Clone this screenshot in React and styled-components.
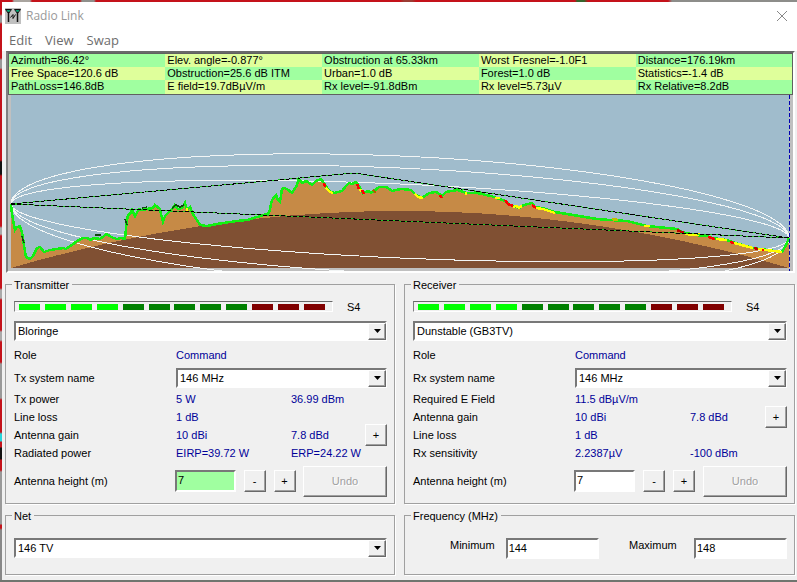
import React from "react";
import styled, { createGlobalStyle } from "styled-components";

const GlobalStyle = createGlobalStyle`
  * { box-sizing: border-box; }
  body { margin: 0; }
  body, button, input, select {
    font-family: "Liberation Sans", Arial, sans-serif;
    font-size: 11px;
    line-height: 14px;
    color: #000;
  }
`;

const Desktop = styled.div`
  display: flex;
  min-height: 100vh;
  padding: 2px 0 2px 2px;
  background:
    linear-gradient(#70756f, #70756f) bottom / 100% 2px no-repeat,
    linear-gradient(90deg, #c4121a 12px, #a9a49f 14px 30px, #c4121a 32px 80px, #8f8f8b 82px 94px, #c4121a 96px 400px, #9b3d34 404px 412px, #c4121a 416px 575px, #35652c 577px 584px, #c4121a 588px 668px, #8d8d8a 672px) top / 100% 2px no-repeat,
    linear-gradient(#c4121a 14px, #999 16px 22px, #c4121a 24px 58px, #999 60px 68px, #c4121a 70px 160px, #111 162px 174px, #c4121a 176px 226px, #aaa 228px 234px, #c4121a 236px 288px, #aaa 290px 298px, #c4121a 300px 330px, #aaa 332px 340px, #c4121a 342px 362px, #999 364px 398px, #c4121a 400px 432px, #25d6dc 434px 441px, #c4121a 442px 447px, #111 448px 459px, #c4121a 460px 470px, #999 472px 524px, #c4121a 525px 528px, #888 530px);
`;

const Window = styled.main`
  flex: 1;
  min-width: 0;
  background: #f0f0f0;
`;

const TitleBar = styled.header`
  display: flex;
  align-items: center;
  gap: 5px;
  height: 27px;
  padding: 0 9px 0 3px;
  background: #fff;
`;

const Title = styled.h1`
  flex: 1;
  margin: 0;
  font: 400 12px/18px "Open Sans", "Noto Sans", sans-serif;
  color: #999;
`;

const CloseButton = styled.button`
  display: flex;
  padding: 0;
  border: 0;
  background: none;
`;

const MenuBar = styled.nav`
  display: flex;
  gap: 13px;
  height: 22px;
  padding: 0 7px;
  background: #fff;
`;

const MenuItem = styled.button`
  padding: 0;
  border: 0;
  background: none;
  font: 400 13px/22px "Open Sans", "Noto Sans", sans-serif;
  color: #6d6d6d;
`;

const ProfilePanel = styled.section`
  margin: 0 2px 0 4px;
  border: 2px solid;
  border-color: #696969 #fff #fff #808080;
  background: #c0c0c0;
`;

const Readouts = styled.table`
  width: 100%;
  table-layout: fixed;
  border-collapse: collapse;
  border: 1px solid #606060;
`;

const ReadoutRow = styled.tr`
  height: 13px;

  &:last-child { height: 14px; }
`;

const Readout = styled.td`
  padding: 0 0 0 2px;
  line-height: 13px;
  white-space: nowrap;
  background: ${(p) => (p.$alt ? "#dfff9b" : "#a0ffa0")};
`;

const Chart = styled.svg`
  display: block;
  width: 100%;
  height: 176px;
`;

const Panels = styled.div`
  display: grid;
  grid-template-columns: 390fr 391fr;
  column-gap: 9px;
  row-gap: 5px;
  padding: 5px 2px 5px 3px;
`;

const Group = styled.fieldset`
  min-width: 0;
  margin: 0;
  padding: 0 7px 5px 8px;
  border: 1px solid #a0a0a0;
  box-shadow: 1px 1px 0 #fff;
`;

const Legend = styled.legend`
  height: 14px;
  margin-left: -2px;
  padding: 0 3px 0 2px;
`;

const MeterRow = styled.div`
  display: flex;
  align-items: center;
  gap: 14px;
  padding: 8px 0 7px;
`;

const Meter = styled.div`
  display: flex;
  justify-content: space-between;
  width: 319px;
  height: 11px;
  padding: 1px 7px 1px 4px;
  border: 1px solid;
  border-color: #696969 #fff #fff #808080;
`;

const Segment = styled.span`
  width: 21px;
  height: 6px;
  margin-top: 1px;
  background: ${(p) => p.$color};
`;

const Sunken = styled.div`
  position: relative;
  min-width: 0;
  height: 20px;
  border: 2px solid;
  border-color: #787878 #fff #fff #787878;
  background: #fff;
`;

const Select = styled.select`
  display: block;
  appearance: none;
  width: 100%;
  height: 16px;
  padding: 0 18px 0 2px;
  border: 0;
  outline: 0;
  line-height: 16px;
  background: #fff;
`;

const DropArrow = styled.span`
  position: absolute;
  top: 0;
  right: -1px;
  display: grid;
  place-items: center;
  width: 18px;
  height: 17px;
  border: 1px solid;
  border-color: #fff #696969 #696969 #fff;
  box-shadow: inset -1px -1px 0 #a0a0a0;
  background: #f0f0f0;
  pointer-events: none;
`;

const Fields = styled.div`
  display: grid;
  grid-template-columns: 162px 115px 1fr;
  grid-template-rows: 25px 22px;
  grid-auto-rows: 18px;
  align-items: center;
  padding: 2px 0 3px;
`;

const FieldLabel = styled.label`
  grid-column: 1;
`;

const SystemLabel = styled(FieldLabel)`
  align-self: start;
  line-height: 20px;
`;

const SystemField = styled.div`
  grid-column: 2 / -1;
  align-self: start;
`;

const Value = styled.output`
  color: #000099;
  white-space: nowrap;
`;

const PushButton = styled.button`
  width: ${(p) => (p.$large ? "84px" : "22px")};
  height: ${(p) => (p.$large ? "31px" : "22px")};
  padding: 0;
  border: 1px solid;
  border-color: #fff #696969 #696969 #fff;
  box-shadow: inset -1px -1px 0 #a0a0a0;
  background: #f0f0f0;

  &:disabled { color: #a0a0a0; text-shadow: 1px 1px 0 #fff; }
`;

const LastCell = styled.div`
  display: flex;
  justify-content: space-between;
  align-items: center;
  height: 18px;
`;

const HeightLine = styled.div`
  display: grid;
  grid-template-columns: 161px 1fr;
  align-items: center;
  height: 33px;
`;

const HeightControls = styled.div`
  display: flex;
  align-items: center;
  justify-content: space-between;
`;

const HeightBox = styled.input`
  width: 61px;
  height: 22px;
  padding: 0 2px 3px 1px;
  border: 2px solid;
  border-color: #787878 #fff #fff #787878;
  outline: 0;
  background: ${(p) => (p.$changed ? "#a0ffa0" : "#fff")};
`;

const Steppers = styled.div`
  display: flex;
  gap: 8px;
`;

const NetBody = styled.div`
  padding: 15px 0 10px;
`;

const FrequencyBody = styled.div`
  display: flex;
  justify-content: space-between;
  padding: 15px 0 10px 37px;
`;

const Frequency = styled.label`
  display: flex;
  gap: 11px;
`;

const FrequencyName = styled.span`
  min-width: ${(p) => (p.$wide ? "54px" : "41px")};
`;

const FrequencyBox = styled.input`
  width: 93px;
  height: 21px;
  padding: 0 1px;
  border: 2px solid;
  border-color: #787878 #fff #fff #787878;
  outline: 0;
`;

const READOUTS = [
  ["Azimuth=86.42°", "Elev. angle=-0.877°", "Obstruction at 65.33km", "Worst Fresnel=-1.0F1", "Distance=176.19km"],
  ["Free Space=120.6 dB", "Obstruction=25.6 dB ITM", "Urban=1.0 dB", "Forest=1.0 dB", "Statistics=-1.4 dB"],
  ["PathLoss=146.8dB", "E field=19.7dBµV/m", "Rx level=-91.8dBm", "Rx level=5.73µV", "Rx Relative=8.2dB"],
];

const TERRAIN =
  "11,204 12,214 15,230 17,227 20,226 22,233 24,245 26,257 30,259 33,256 37,248 40,247 44,252 50,250 57,249 63,248 66,249 72,245 77,241 83,238 87,238 90,240 94,238 100,239 104,236 107,234 111,237 117,239 121,238 125,239 126,228 127,220 128,215 130,214 132,210 135,216 139,209 142,210 147,209 153,208 155,205 160,209 162,218 163,222 165,216 168,213 171,210 173,208 175,205 178,209 182,208 185,203 187,210 190,207 193,214 197,220 200,225 207,226 217,224 230,222 237,221 247,220 257,217 264,215 269,213 272,200 276,195 278,200 280,202 282,189 284,188 287,189 292,193 296,187 299,179 302,183 306,181 312,185 316,181 321,179 324,183 329,191 334,193 342,191 346,186 349,183 352,184 356,182 359,186 363,193 368,191 371,193 374,191 379,187 386,187 392,191 401,189 411,190 416,195 422,198 429,193 436,192 442,196 446,192 457,190 467,193 477,193 491,196 497,198 505,201 510,205 519,208 524,205 532,203 535,207 542,208 555,212 573,215 597,219 610,220 627,221 647,226 677,229 682,232 695,235 707,236 713,238 727,240 732,242 753,248 760,249 782,252 786,245 789,238";

const OBSTRUCTIONS = [
  ["#ffff00", "326,188 330,192 333,193"],
  ["#ff0000", "324,183 325,187"],
  ["#ff0000", "357,184 359,189"],
  ["#ffff00", "360,189 362,192"],
  ["#ff0000", "362,190 364,194"],
  ["#b06000", "373,190 376,193"],
  ["#ffff00", "415,194 418,197 423,198"],
  ["#ff0000", "440,195 442,198"],
  ["#ffff00", "465,193 467,194"],
  ["#ffff00", "495,198 500,198"],
  ["#ff0000", "505,200 508,204 513,206"],
  ["#ffff00", "513,207 516,206 519,208 522,206"],
  ["#ff0000", "532,205 536,208"],
  ["#ffff00", "536,208 543,209 555,213"],
  ["#c0c000", "612,219 618,220"],
  ["#ffff00", "644,226 650,226"],
  ["#c00000", "677,230 684,233"],
  ["#ffff00", "685,234 696,235 700,234"],
  ["#ff0000", "708,237 715,239"],
  ["#ffff00", "716,239 727,240"],
  ["#ff0000", "730,242 734,243"],
  ["#ffff00", "734,243 753,248"],
  ["#c00000", "754,248 758,249"],
  ["#ffff00", "758,249 782,252"],
  ["#ff0000", "762,250 764,250"],
  ["#ffff00", "186,209 188,210"],
];

const SIGHT_LINES = "M11 204L267 181 354 173 789 238M11 204L789 238";

function fresnelPoints(radius) {
  const steps = 60;
  const side = (sign) =>
    Array.from({ length: steps + 1 }, (_, i) => {
      const t = (1 - Math.cos((Math.PI * i) / steps)) / 2;
      const y = 204 + 34 * t + sign * radius * 2 * Math.sqrt(t * (1 - t));
      return `${(11 + 778 * t).toFixed(1)},${y.toFixed(1)}`;
    });
  return [...side(-1), ...side(1).reverse()].join(" ");
}

function Profile() {
  return (
    <Chart
      viewBox="8 95 785 176"
      preserveAspectRatio="none"
      shapeRendering="crispEdges"
      role="img"
      aria-label="Terrain profile"
    >
      <rect x="11" y="95" width="778" height="173" fill="#a0bccc" />
      <polygon points={`${TERRAIN} 789,268 11,268`} fill="#c68a46" />
      <path d="M11 268Q400 154 789 268Z" fill="#805033" />
      <g fill="none" stroke="#f2f5f5" strokeWidth="1">
        {[37, 53, 65].map((r) => (
          <polygon key={r} points={fresnelPoints(r)} />
        ))}
      </g>
      <polyline points={TERRAIN} fill="none" stroke="#12f012" strokeWidth="2.5" />
      <path d="M142 208l5-1M172 208l4-3 4 2 4-2M95 235h6M22 236l2 7M125 219l2 6" fill="none" stroke="#104a10" strokeWidth="1.5" />
      {OBSTRUCTIONS.map(([color, points]) => (
        <polyline key={points} points={points} fill="none" stroke={color} strokeWidth="2.5" />
      ))}
      <path d={SIGHT_LINES} fill="none" stroke="#1fc41f" />
      <path d={SIGHT_LINES} fill="none" stroke="#000" strokeDasharray="4 2" />
      <path d="M789.5 95V271" stroke="#0000b0" strokeDasharray="4 2" />
    </Chart>
  );
}

function AppIcon() {
  return (
    <svg width="16" height="16" viewBox="0 0 16 16" aria-hidden="true">
      <path d="M0 0h16v16H0z" fill="#c0c0c0" />
      <path d="M1 2h5L3.500 5zM10 2h5l-2.500 3z" fill="#00a070" />
      <path d="M.5 1.500l3 4 3-4M9.500 1.500l3 4 3-4M.5 1.500h6M9.500 1.500h6" fill="none" stroke="#111" />
      <path d="M3.500 4v10M12.500 4v10" stroke="#111" strokeWidth="1.500" />
      <path d="M5.500 9.500l2.500-3v4l2.500-4" fill="none" stroke="#111" />
    </svg>
  );
}

function DropDown({ id, value, label }) {
  return (
    <Sunken>
      <Select id={id} aria-label={label} defaultValue={value}>
        <option>{value}</option>
      </Select>
      <DropArrow>
        <svg width="7" height="4" viewBox="0 0 7 4" aria-hidden="true">
          <path d="M0 0h7L3.500 4z" />
        </svg>
      </DropArrow>
    </Sunken>
  );
}

function Station({ id, title, site, systemLabel, rows, changed }) {
  return (
    <Group>
      <Legend>{title}</Legend>
      <MeterRow>
        <Meter role="img" aria-label="Signal level S4">
          {Array.from({ length: 12 }, (_, i) => (
            <Segment key={i} $color={i < 4 ? "#00ff00" : i < 9 ? "#008000" : "#800000"} />
          ))}
        </Meter>
        <span>S4</span>
      </MeterRow>
      <DropDown id={`${id}-site`} label={title} value={site} />
      <Fields>
        <FieldLabel htmlFor={`${id}-role`}>Role</FieldLabel>
        <Value id={`${id}-role`}>Command</Value>
        <SystemLabel htmlFor={`${id}-system`}>{systemLabel}</SystemLabel>
        <SystemField>
          <DropDown id={`${id}-system`} value="146 MHz" />
        </SystemField>
        {rows.map(([name, first, second, plus], i) => (
          <React.Fragment key={name}>
            <FieldLabel htmlFor={`${id}-value-${i}`}>{name}</FieldLabel>
            <Value id={`${id}-value-${i}`}>{first}</Value>
            <LastCell>
              {second && <Value>{second}</Value>}
              {plus && <PushButton type="button" aria-label="Antenna details">+</PushButton>}
            </LastCell>
          </React.Fragment>
        ))}
      </Fields>
      <HeightLine>
        <label htmlFor={`${id}-height`}>Antenna height (m)</label>
        <HeightControls>
          <HeightBox id={`${id}-height`} defaultValue="7" $changed={changed} />
          <Steppers>
            <PushButton type="button" aria-label="Lower antenna">-</PushButton>
            <PushButton type="button" aria-label="Raise antenna">+</PushButton>
          </Steppers>
          <PushButton type="button" $large disabled>Undo</PushButton>
        </HeightControls>
      </HeightLine>
    </Group>
  );
}

export default function App() {
  return (
    <Desktop>
      <GlobalStyle />
      <Window>
        <TitleBar>
          <AppIcon />
          <Title>Radio Link</Title>
          <CloseButton type="button" aria-label="Close">
            <svg width="12" height="12" viewBox="0 0 12 12" aria-hidden="true">
              <path d="M1 1l10 10M11 1L1 11" stroke="#888" />
            </svg>
          </CloseButton>
        </TitleBar>
        <MenuBar>
          <MenuItem type="button">Edit</MenuItem>
          <MenuItem type="button">View</MenuItem>
          <MenuItem type="button">Swap</MenuItem>
        </MenuBar>
        <ProfilePanel>
          <Readouts>
            <tbody>
              {READOUTS.map((row, r) => (
                <ReadoutRow key={r}>
                  {row.map((text, c) => (
                    <Readout key={c} $alt={(r + c) % 2 === 1}>{text}</Readout>
                  ))}
                </ReadoutRow>
              ))}
            </tbody>
          </Readouts>
          <Profile />
        </ProfilePanel>
        <Panels>
          <Station
            id="tx"
            title="Transmitter"
            site="Bloringe"
            systemLabel="Tx system name"
            changed
            rows={[
              ["Tx power", "5 W", "36.99 dBm"],
              ["Line loss", "1 dB"],
              ["Antenna gain", "10 dBi", "7.8 dBd", true],
              ["Radiated power", "EIRP=39.72 W", "ERP=24.22 W"],
            ]}
          />
          <Station
            id="rx"
            title="Receiver"
            site="Dunstable (GB3TV)"
            systemLabel="Rx system name"
            rows={[
              ["Required E Field", "11.5 dBµV/m"],
              ["Antenna gain", "10 dBi", "7.8 dBd", true],
              ["Line loss", "1 dB"],
              ["Rx sensitivity", "2.2387µV", "-100 dBm"],
            ]}
          />
          <Group>
            <Legend>Net</Legend>
            <NetBody>
              <DropDown id="net" label="Net" value="146 TV" />
            </NetBody>
          </Group>
          <Group>
            <Legend>Frequency (MHz)</Legend>
            <FrequencyBody>
              <Frequency>
                <FrequencyName>Minimum</FrequencyName>
                <FrequencyBox defaultValue="144" />
              </Frequency>
              <Frequency>
                <FrequencyName $wide>Maximum</FrequencyName>
                <FrequencyBox defaultValue="148" />
              </Frequency>
            </FrequencyBody>
          </Group>
        </Panels>
      </Window>
    </Desktop>
  );
}
